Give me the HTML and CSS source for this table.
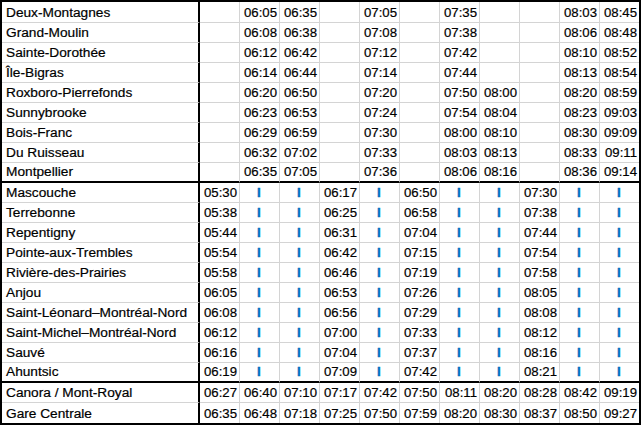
FILE: index.html
```html
<!DOCTYPE html>
<html lang="fr">
<head>
<meta charset="utf-8">
<title>Horaire</title>
<link rel="stylesheet" href="styles.css">
</head>
<body>
<div class="sheet">
  <div class="row first"><div class="c name">Deux-Montagnes</div><div class="c"></div><div class="c t">06:05</div><div class="c t">06:35</div><div class="c"></div><div class="c t">07:05</div><div class="c"></div><div class="c t">07:35</div><div class="c"></div><div class="c"></div><div class="c t">08:03</div><div class="c t">08:45</div></div>
  <div class="row"><div class="c name">Grand-Moulin</div><div class="c"></div><div class="c t">06:08</div><div class="c t">06:38</div><div class="c"></div><div class="c t">07:08</div><div class="c"></div><div class="c t">07:38</div><div class="c"></div><div class="c"></div><div class="c t">08:06</div><div class="c t">08:48</div></div>
  <div class="row"><div class="c name">Sainte-Dorothée</div><div class="c"></div><div class="c t">06:12</div><div class="c t">06:42</div><div class="c"></div><div class="c t">07:12</div><div class="c"></div><div class="c t">07:42</div><div class="c"></div><div class="c"></div><div class="c t">08:10</div><div class="c t">08:52</div></div>
  <div class="row"><div class="c name">Île-Bigras</div><div class="c"></div><div class="c t">06:14</div><div class="c t">06:44</div><div class="c"></div><div class="c t">07:14</div><div class="c"></div><div class="c t">07:44</div><div class="c"></div><div class="c"></div><div class="c t">08:13</div><div class="c t">08:54</div></div>
  <div class="row"><div class="c name">Roxboro-Pierrefonds</div><div class="c"></div><div class="c t">06:20</div><div class="c t">06:50</div><div class="c"></div><div class="c t">07:20</div><div class="c"></div><div class="c t">07:50</div><div class="c t">08:00</div><div class="c"></div><div class="c t">08:20</div><div class="c t">08:59</div></div>
  <div class="row"><div class="c name">Sunnybrooke</div><div class="c"></div><div class="c t">06:23</div><div class="c t">06:53</div><div class="c"></div><div class="c t">07:24</div><div class="c"></div><div class="c t">07:54</div><div class="c t">08:04</div><div class="c"></div><div class="c t">08:23</div><div class="c t">09:03</div></div>
  <div class="row"><div class="c name">Bois-Franc</div><div class="c"></div><div class="c t">06:29</div><div class="c t">06:59</div><div class="c"></div><div class="c t">07:30</div><div class="c"></div><div class="c t">08:00</div><div class="c t">08:10</div><div class="c"></div><div class="c t">08:30</div><div class="c t">09:09</div></div>
  <div class="row"><div class="c name">Du Ruisseau</div><div class="c"></div><div class="c t">06:32</div><div class="c t">07:02</div><div class="c"></div><div class="c t">07:33</div><div class="c"></div><div class="c t">08:03</div><div class="c t">08:13</div><div class="c"></div><div class="c t">08:33</div><div class="c t">09:11</div></div>
  <div class="row sep"><div class="c name">Montpellier</div><div class="c"></div><div class="c t">06:35</div><div class="c t">07:05</div><div class="c"></div><div class="c t">07:36</div><div class="c"></div><div class="c t">08:06</div><div class="c t">08:16</div><div class="c"></div><div class="c t">08:36</div><div class="c t">09:14</div></div>

  <div class="row"><div class="c name">Mascouche</div><div class="c t">05:30</div><div class="c i">I</div><div class="c i">I</div><div class="c t">06:17</div><div class="c i">I</div><div class="c t">06:50</div><div class="c i">I</div><div class="c i">I</div><div class="c t">07:30</div><div class="c i">I</div><div class="c i">I</div></div>
  <div class="row"><div class="c name">Terrebonne</div><div class="c t">05:38</div><div class="c i">I</div><div class="c i">I</div><div class="c t">06:25</div><div class="c i">I</div><div class="c t">06:58</div><div class="c i">I</div><div class="c i">I</div><div class="c t">07:38</div><div class="c i">I</div><div class="c i">I</div></div>
  <div class="row"><div class="c name">Repentigny</div><div class="c t">05:44</div><div class="c i">I</div><div class="c i">I</div><div class="c t">06:31</div><div class="c i">I</div><div class="c t">07:04</div><div class="c i">I</div><div class="c i">I</div><div class="c t">07:44</div><div class="c i">I</div><div class="c i">I</div></div>
  <div class="row"><div class="c name">Pointe-aux-Trembles</div><div class="c t">05:54</div><div class="c i">I</div><div class="c i">I</div><div class="c t">06:42</div><div class="c i">I</div><div class="c t">07:15</div><div class="c i">I</div><div class="c i">I</div><div class="c t">07:54</div><div class="c i">I</div><div class="c i">I</div></div>
  <div class="row"><div class="c name">Rivière-des-Prairies</div><div class="c t">05:58</div><div class="c i">I</div><div class="c i">I</div><div class="c t">06:46</div><div class="c i">I</div><div class="c t">07:19</div><div class="c i">I</div><div class="c i">I</div><div class="c t">07:58</div><div class="c i">I</div><div class="c i">I</div></div>
  <div class="row"><div class="c name">Anjou</div><div class="c t">06:05</div><div class="c i">I</div><div class="c i">I</div><div class="c t">06:53</div><div class="c i">I</div><div class="c t">07:26</div><div class="c i">I</div><div class="c i">I</div><div class="c t">08:05</div><div class="c i">I</div><div class="c i">I</div></div>
  <div class="row"><div class="c name">Saint-Léonard–Montréal-Nord</div><div class="c t">06:08</div><div class="c i">I</div><div class="c i">I</div><div class="c t">06:56</div><div class="c i">I</div><div class="c t">07:29</div><div class="c i">I</div><div class="c i">I</div><div class="c t">08:08</div><div class="c i">I</div><div class="c i">I</div></div>
  <div class="row"><div class="c name">Saint-Michel–Montréal-Nord</div><div class="c t">06:12</div><div class="c i">I</div><div class="c i">I</div><div class="c t">07:00</div><div class="c i">I</div><div class="c t">07:33</div><div class="c i">I</div><div class="c i">I</div><div class="c t">08:12</div><div class="c i">I</div><div class="c i">I</div></div>
  <div class="row"><div class="c name">Sauvé</div><div class="c t">06:16</div><div class="c i">I</div><div class="c i">I</div><div class="c t">07:04</div><div class="c i">I</div><div class="c t">07:37</div><div class="c i">I</div><div class="c i">I</div><div class="c t">08:16</div><div class="c i">I</div><div class="c i">I</div></div>
  <div class="row sep"><div class="c name">Ahuntsic</div><div class="c t">06:19</div><div class="c i">I</div><div class="c i">I</div><div class="c t">07:09</div><div class="c i">I</div><div class="c t">07:42</div><div class="c i">I</div><div class="c i">I</div><div class="c t">08:21</div><div class="c i">I</div><div class="c i">I</div></div>

  <div class="row"><div class="c name">Canora / Mont-Royal</div><div class="c t">06:27</div><div class="c t">06:40</div><div class="c t">07:10</div><div class="c t">07:17</div><div class="c t">07:42</div><div class="c t">07:50</div><div class="c t">08:11</div><div class="c t">08:20</div><div class="c t">08:28</div><div class="c t">08:42</div><div class="c t">09:19</div></div>
  <div class="row last"><div class="c name">Gare Centrale</div><div class="c t">06:35</div><div class="c t">06:48</div><div class="c t">07:18</div><div class="c t">07:25</div><div class="c t">07:50</div><div class="c t">07:59</div><div class="c t">08:20</div><div class="c t">08:30</div><div class="c t">08:37</div><div class="c t">08:50</div><div class="c t">09:27</div></div>
</div>
</body>
</html>
```
FILE: styles.css
```css
html, body {
  margin: 0;
  padding: 0;
  background: #ffffff;
}

.sheet {
  display: grid;
  grid-template-columns: 198px repeat(10, 40px) 39px;
  grid-template-rows: 21px repeat(20, 20px);
  width: 637px;
  border: 2px solid #000000;
  font-family: "Liberation Sans", Arial, sans-serif;
  font-size: 13.7px;
  color: #000000;
  -webkit-text-stroke: 0.2px #000000;
}

.row {
  display: contents;
}

.c {
  box-sizing: border-box;
  display: flex;
  align-items: flex-end;
  border-right: 1px solid #d4d4d4;
  border-bottom: 1px solid #d4d4d4;
  line-height: 16px;
  padding: 0 2px 1px 3px;
  white-space: nowrap;
  overflow: hidden;
}

.c:last-child {
  border-right: none;
}

.name {
  border-right: 2px solid #000000;
  padding-left: 4px;
}

.t {
  justify-content: flex-end;
  font-size: 13.2px;
}

.i {
  justify-content: center;
  color: #0070c0;
  -webkit-text-stroke: 0.4px #0070c0;
  font-size: 13.5px;
  font-weight: bold;
  padding-left: 1px;
}

.sep .c {
  border-bottom: 2px solid #000000;
}

.last .c {
  border-bottom: none;
}
```
